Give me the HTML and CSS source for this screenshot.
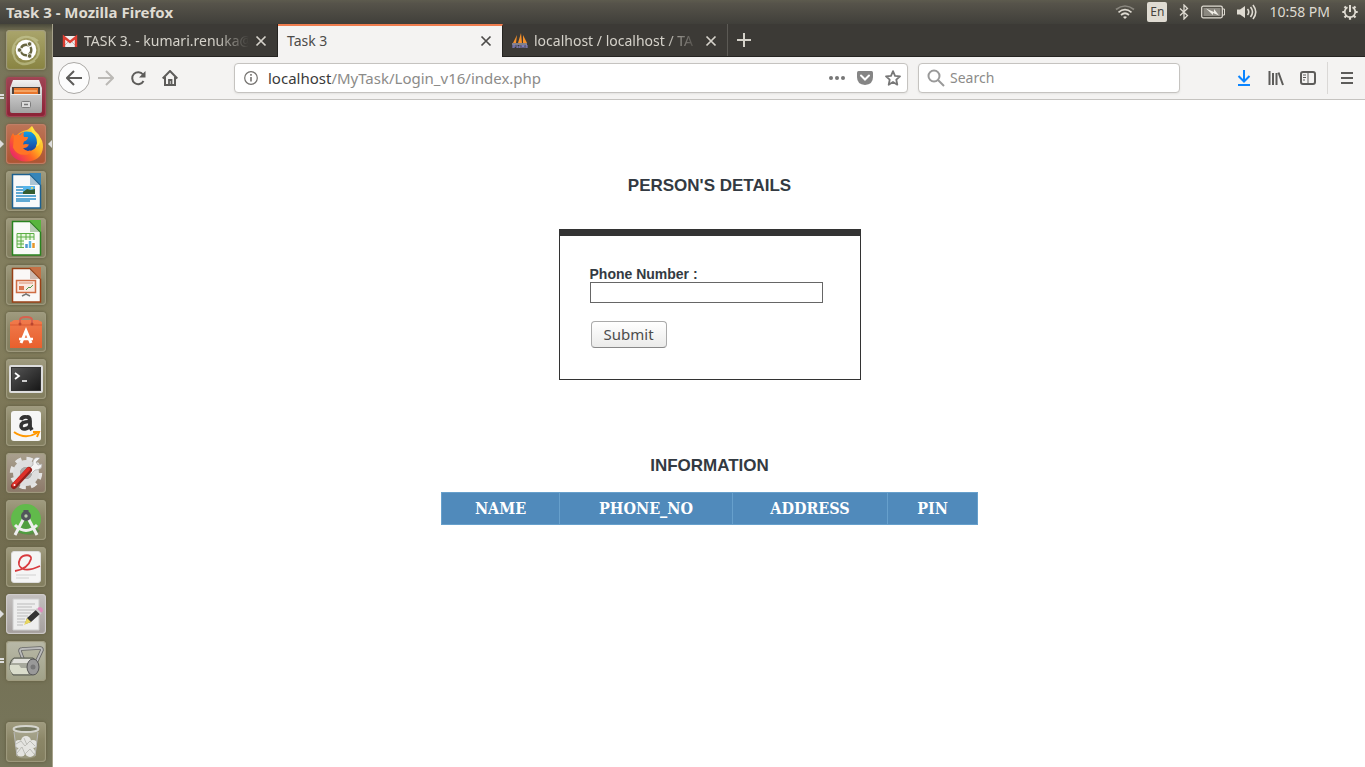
FILE: index.html
```html
<!DOCTYPE html>
<html lang="en">
<head>
<meta charset="utf-8">
<title>Task 3</title>
<link rel="stylesheet" href="styles.css">
</head>
<body>
<header class="panel">
  <span class="panel-title">Task 3 - Mozilla Firefox</span>
  <div class="indicators">
    <svg width="20" height="16" viewBox="0 0 20 16" fill="none" stroke="#dfdbd2" stroke-width="1.7"><path d="M1 5.5Q10-1.500 19 5.500" stroke="#8a877f"/><path d="M3.500 8.300Q10 3 16.500 8.300M6 11Q10 7.500 14 11"/><path d="M8 13Q10 11.300 12 13L10 15z" fill="#dfdbd2" stroke="none"/></svg>
    <span class="lang">En</span>
    <svg width="10" height="16" viewBox="0 0 10 16" fill="none" stroke="#dfdbd2" stroke-width="1.300"><path d="M1 4.500l7.500 7L5 15V1l3.500 3.500L1 11.500"/></svg>
    <svg width="24" height="14" viewBox="0 0 24 14"><rect x=".7" y="1.200" width="20.600" height="11.600" rx="1.500" fill="none" stroke="#dfdbd2" stroke-width="1.300"/><rect x="2.500" y="3" width="17" height="8" fill="#8b8880"/><path d="M22 4h1.500v6H22" fill="none" stroke="#dfdbd2"/><path d="M5 3.500l8 3.500V4l5 6.500-6-2.500v2z" fill="#f0ede6"/></svg>
    <svg width="20" height="16" viewBox="0 0 20 16" fill="none" stroke="#dfdbd2" stroke-width="1.600"><path d="M0 5.500h3L8 2v12L3 10.500H0z" fill="#dfdbd2" stroke="none"/><path d="M10.500 5q2.500 3 0 6M13.500 3q4 5 0 10M16 1q5.500 7 0 14"/></svg>
    <time class="clock">10:58 PM</time>
    <svg width="16" height="16" viewBox="0 0 16 16" fill="none" stroke="#dfdbd2"><path d="M5.500 3.200a5.300 5.300 0 1 0 5 0" stroke-width="1.800"/><path d="M8 1v7" stroke-width="2"/><path d="M.3 8H3m10 0h2.700M8 13v2.800M2.500 13.500l2-2m9 2l-2-2M2.500 2.500l2 2m9-2l-2 2" stroke-width="2.200"/></svg>
  </div>
</header>
<div class="desktop">
  <nav class="launcher" aria-label="Launcher">
    <button class="app olive" aria-label="Search"><svg viewBox="0 0 40 40"><path d="M7 24C4 9 22 2 32 11M11 10C24 0 38 15 31 27M32 14c5 15-10 24-22 17M29 31C14 40 3 28 9 15" fill="none" stroke="#ced0a0" stroke-opacity=".55" stroke-width="2"/><circle cx="20" cy="20" r="10.300" fill="#fff"/><circle cx="20" cy="20" r="5.300" fill="none" stroke="#686642" stroke-width="2.400" stroke-dasharray="9.700 1.400" stroke-dashoffset="4"/><g fill="#686642" stroke="#fff" stroke-width=".8"><circle cx="13.500" cy="20" r="2.300"/><circle cx="23.600" cy="14" r="2.300"/><circle cx="23.600" cy="26" r="2.300"/></g></svg></button>
    <button class="app crimson" aria-label="Files"><svg viewBox="0 0 40 40"><defs><linearGradient id="g1" x2="0" y2="1"><stop stop-color="#f2f2f2"/><stop offset="1" stop-color="#999"/></linearGradient><linearGradient id="g5" x2="0" y2="1"><stop stop-color="#c9c9c9"/><stop offset="1" stop-color="#a2a2a2"/></linearGradient></defs><path d="M7 3h26l3 8v23q0 2-2 2H6q-2 0-2-2V11z" fill="url(#g1)"/><path d="M6 10h28v7H6z" fill="#514239"/><path d="M8 11h24v6H8z" fill="#e8772e"/><path d="M8 14h23" stroke="#ffd097"/><path d="M5 17h30v17q0 2-2 2H7q-2 0-2-2z" fill="url(#g5)"/><path d="M5 17.500h30" stroke="#eee"/><rect x="15.500" y="24.500" width="9" height="6" rx="1" fill="#ddd" stroke="#7c7c7c"/><path d="M18 27.500h4" stroke="#777" stroke-width="1.500"/></svg><i class="pips two"></i></button>
    <button class="app rust" aria-label="Firefox"><svg viewBox="0 0 40 40"><defs><linearGradient id="g2" x1=".95" y1=".1" x2=".1" y2=".9"><stop stop-color="#fff04e"/><stop offset=".4" stop-color="#ffb020"/><stop offset=".65" stop-color="#ff6424"/><stop offset="1" stop-color="#e8226c"/></linearGradient><linearGradient id="g6" x2="0" y2="1"><stop stop-color="#10a0e8"/><stop offset="1" stop-color="#1c3f9c"/></linearGradient></defs><path d="M7 9q1 3 3 3 4-5 11-6 2-1 5-4 0 5 4 7 2 1 3 3 4 4 4 11-1 14-17 14.500Q4 37 3.500 22 3.500 14 7 9z" fill="url(#g2)"/><path d="M13 11q4-5 12-3 6 3 6 11-1 8-9 8-8 0-9-7z" fill="url(#g6)"/><path d="M8 12q3-2 6-1 1-2 4-3-1 3 0 5h4q0 3-4 4.500l-1 3q3-1 6 0-2 4-6 3.500 3 4 7 2.500 2 2-2 4-11 2-15-7z" fill="#ff7426"/><path d="M26 2q-2 6 3 9 4 5 1 12 7-4 3-12-4-3-7-9z" fill="#ffe540"/></svg><i class="pips"></i><i class="focus"></i></button>
    <button class="app" aria-label="Writer"><svg viewBox="0 0 40 40"><path d="M6.500 3.500H24L34.500 14v23h-28z" fill="#f8f9fa" stroke="#1c6090" stroke-width="1.500"/><path d="M23 2h12v12z" fill="#3585b9"/><path d="M24 3v11h10z" fill="#1f648f" opacity=".35"/><path d="M10 16h9m-9 3h9m-9 3h9m-9 3h20M10 28h20m-20 2h14" stroke="#60a9d3" stroke-width="1.800"/><path d="M17 15h12v8H17z" fill="#54b5ec"/><path d="M17 21l4-3 4 1 4-1v5H17z" fill="#355c30"/><circle cx="26" cy="17" r="1" fill="#ffe15a"/></svg></button>
    <button class="app" aria-label="Calc"><svg viewBox="0 0 40 40"><path d="M6.500 3.500H24L34.500 14v23h-28z" fill="#f8faf7" stroke="#28821e" stroke-width="1.500"/><path d="M23 2h12v12z" fill="#58b53d"/><path d="M24 3v11h10z" fill="#39762e" opacity=".35"/><path d="M11 15.500h17v14H11z" fill="#e8f7df" stroke="#5bae44"/><path d="M11 19h17m-17 4h17m-17 3h17M15 15v14m5-14v14m4-14v14" stroke="#5bae44"/><path d="M18 22h12v9H18z" fill="#fff"/><path d="M20.500 30v-4" stroke="#5194cc" stroke-width="2.500"/><path d="M24 30v-7" stroke="#5bb4df" stroke-width="2.500"/><path d="M27.500 30v-5" stroke="#e8972b" stroke-width="2.500"/></svg></button>
    <button class="app" aria-label="Impress"><svg viewBox="0 0 40 40"><path d="M6.500 3.500H24L34.500 14v23h-28z" fill="#faf8f7" stroke="#994016" stroke-width="1.500"/><path d="M23 2h12v12z" fill="#c57044"/><path d="M24 3v11h10z" fill="#75452b" opacity=".35"/><path d="M10.500 15.500h19v12h-19z" fill="#fae9e1" stroke="#cf6c43" stroke-width="1.500"/><path d="M13 18h14" stroke="#d98e6d"/><path d="M13 21h5v4h-5z" fill="#d97751"/><path d="M20 25l3-3 1 1 3-3" fill="none" stroke="#4e9b4a"/><path d="M20 28v2m-4 1l4-2 4 2" fill="none" stroke="#777" stroke-width="1.500"/></svg></button>
    <button class="app" aria-label="Software"><svg viewBox="0 0 40 40"><defs><linearGradient id="g3" x2="0" y2="1"><stop stop-color="#f07a4c"/><stop offset="1" stop-color="#e8602d"/></linearGradient></defs><path d="M5 10l3-2h24l4 2v26H4V10z" fill="url(#g3)"/><path d="M4 13h32" stroke="#d95b33"/><path d="M14 12V8q0-3 6-3t6 3v4" fill="none" stroke="#d9604d" stroke-width="2"/><circle cx="14" cy="12" r="1.500" fill="#b9452e"/><circle cx="26" cy="12" r="1.500" fill="#b9452e"/><path d="M15 31l5-12 5 12" fill="none" stroke="#fff" stroke-width="3"/><path d="M13 27h14" stroke="#fff" stroke-width="2.500"/></svg></button>
    <button class="app" aria-label="Terminal"><svg viewBox="0 0 40 40"><defs><linearGradient id="g4" x2="1" y2="1"><stop stop-color="#555"/><stop offset="1" stop-color="#171717"/></linearGradient></defs><rect x="3" y="6" width="34" height="28" rx="2" fill="#ddd"/><rect x="5.500" y="8.500" width="29" height="23" fill="url(#g4)" stroke="#333"/><path d="M9 14l4 3-4 3m7 2h5" fill="none" stroke="#fff" stroke-width="1.700"/></svg></button>
    <button class="app" aria-label="Amazon"><svg viewBox="0 0 40 40"><rect x="5" y="5" width="30" height="30" rx="3" fill="#f6f6f6"/><path d="M15 14q1-4 6-3 3 0 3 4v6l2 3" fill="none" stroke="#333" stroke-width="3.800"/><path d="M24 15.500c-6 0-9 1-9 4.500 0 5 8 3 9-1" fill="none" stroke="#333" stroke-width="3.600"/><path d="M8 26q11 8 23 1" fill="none" stroke="#ff9800" stroke-width="2"/><path d="M27 26h6l-2 5" fill="none" stroke="#ff9800" stroke-width="2"/></svg></button>
    <button class="app grey" aria-label="System settings"><svg viewBox="0 0 40 40"><circle cx="20" cy="20" r="14" fill="none" stroke="#e4e4e4" stroke-width="4.500" stroke-dasharray="6 5"/><circle cx="20" cy="20" r="9.500" fill="none" stroke="#dedede" stroke-width="7"/><circle cx="20" cy="20" r="6" fill="#aaa"/><path d="M22 16l5-4V8q2-5 7-3l-4 4 2 3 4-1q0 6-7 6l-4 4z" fill="#f5f5f5" stroke="#aaa" stroke-width=".7"/><path d="M8 33l15-16" stroke="#94201b" stroke-width="6" stroke-linecap="round"/><path d="M7.500 32l15-16" stroke="#de3029" stroke-width="3.500" stroke-linecap="round"/><circle cx="8.500" cy="32" r="1" fill="#fff"/></svg></button>
    <button class="app" aria-label="Android Studio"><svg viewBox="0 0 40 40"><circle cx="20" cy="19" r="15" fill="#61ba4b"/><path d="M10 32l9-14 15 13Q26 38 10 32z" fill="#448c38" opacity=".6"/><path d="M18 18L9 35m13-17l9 17M9 25q11 11 22 0" fill="none" stroke="#eee" stroke-width="3"/><path d="M20 10v4" stroke="#52555b" stroke-width="5"/><circle cx="20" cy="16" r="5" fill="#52555b"/><circle cx="20" cy="16" r="1.700" fill="#b9cfab"/></svg></button>
    <button class="app" aria-label="Document viewer"><svg viewBox="0 0 40 40"><rect x="5.500" y="4.500" width="29" height="31" rx="2.500" fill="#f5f5f5" stroke="#ddd"/><path d="M9 24Q22 22 25 12c1-5-8-5-11 0-4 8 3 15 20 7" fill="none" stroke="#d83b3f" stroke-width="1.800"/><path d="M10 28h20m-20 3h13" stroke="#ddd" stroke-width="1.500"/></svg></button>
    <button class="app light" aria-label="Text editor"><svg viewBox="0 0 40 40"><path d="M7 5h26v31H7z" fill="#eee" stroke="#ccc"/><path d="M11 10h18M11 13h15M11 16h18M11 19h14M11 22h11M11 25h8M11 28h9M11 31h6" stroke="#bbb"/><path d="M19 30l2-6 10-9 4 4-10 9z" fill="#333"/><path d="M18 31l3-7 4 4z" fill="#e8d65f"/><path d="M31 15l2-2q4 0 4 4l-2 2z" fill="#df8bbb"/><path d="M30 15l5 5" stroke="#ccc" stroke-width="2"/></svg><i class="pips"></i></button>
    <button class="app pale" aria-label="Disk tools"><svg viewBox="0 0 40 40"><path d="M17 18L14 10q0-2 2-2l18-1q2 0 2 2l-7 15" fill="none" stroke="#666" stroke-width="3.500"/><path d="M17 18L14 10q0-2 2-2l18-1q2 0 2 2l-7 15" fill="none" stroke="#bbb" stroke-width="1.800"/><path d="M8 17h19q7 4 4 12-2 5-7 5H7q-4-5-3-11 1-5 4-6z" fill="#a7a99d" stroke="#55584f"/><path d="M4 24h9l2 3h7v6H7q-4-3-3-9z" fill="#d9dccb"/><path d="M8 18h16v4H6z" fill="#e2e2dd"/><ellipse cx="27" cy="26" rx="6" ry="8" fill="#999" stroke="#555"/><circle cx="27" cy="26" r="2.500" fill="#777"/></svg><i class="pips two"></i></button>
    <button class="app bin" aria-label="Trash"><svg viewBox="0 0 40 40"><path d="M8 8h24l-3 27q-9 3-18 0z" fill="#ccd0c5" fill-opacity=".3"/><g fill="#e4e4e0"><circle cx="13" cy="22" r="4"/><circle cx="20" cy="19" r="5"/><circle cx="27" cy="22" r="4"/><circle cx="15" cy="30" r="4.500"/><circle cx="24" cy="30" r="5"/><circle cx="20" cy="26" r="5"/></g><path d="M10 22l5-3 4 5 5-5 5 5M11 31l5-6 3 7 5-5 4 5M18 16l3 7" fill="none" stroke="#bcbcb6"/><ellipse cx="20" cy="7" rx="12.500" ry="3" fill="#777960" stroke="#d5d5ce" stroke-width="2"/><path d="M8 10l3 24m21-24l-3 24" stroke="#bbb"/></svg></button>
  </nav>
  <div class="browser">
    <div class="tabs">
      <div class="tab">
        <svg width="16" height="16" viewBox="0 0 16 16"><path d="M1 3h14v11H1z" fill="#eee"/><path d="M1 14l5-5m9 5l-5-5" stroke="#bbb"/><path d="M2 14V4l6 5 6-5v10" fill="none" stroke="#dc3e32" stroke-width="2.400"/></svg>
        <span class="tab-name faded">TASK 3. - kumari.renuka@</span>
        <button class="close" aria-label="Close tab"><svg viewBox="0 0 12 12"><path d="M1.500 1.500l9 9m0-9l-9 9"/></svg></button>
      </div>
      <div class="tab active">
        <span class="tab-name">Task 3</span>
        <button class="close" aria-label="Close tab"><svg viewBox="0 0 12 12"><path d="M1.500 1.500l9 9m0-9l-9 9"/></svg></button>
      </div>
      <div class="tab">
        <svg width="16" height="16" viewBox="0 0 16 16"><path d="M1 10L5 2l-1 8zM6 10l3-10 1 10zM11 10V2l4 8z" fill="#f6912a"/><path d="M0 11h15" stroke="#cbc7dd"/><path d="M1 15v-3h2v2H1m4 1v-3m0 2h3m0 1v-3m2 3v-3l1 2 1-2v3m2 0v-3h1v3" fill="none" stroke="#8685c8"/></svg>
        <span class="tab-name faded">localhost / localhost / TA</span>
        <button class="close" aria-label="Close tab"><svg viewBox="0 0 12 12"><path d="M1.500 1.500l9 9m0-9l-9 9"/></svg></button>
      </div>
      <button class="new-tab" aria-label="New tab"><svg width="14" height="14" viewBox="0 0 14 14"><path d="M7 0v14M0 7h14" stroke="#d5d2ca" stroke-width="2"/></svg></button>
    </div>
    <div class="toolbar">
      <button class="tool back" aria-label="Back"><svg viewBox="0 0 16 16"><path d="M16 8H1.500m6.500-7L1 8l7 7"/></svg></button>
      <button class="tool forward" aria-label="Forward"><svg viewBox="0 0 16 16"><path d="M0 8h14.500M8 1l7 7-7 7"/></svg></button>
      <button class="tool" aria-label="Reload"><svg viewBox="0 0 16 16"><path d="M13.500 11A6 6 0 1 1 13 4.500"/><path d="M15.500 1v6.500H9z" fill="#5d5c5a" stroke="none"/></svg></button>
      <button class="tool" aria-label="Home"><svg viewBox="0 0 16 16"><path d="M.7 8.500L8 1l7.300 7.500M3 7v8h10V7"/><path d="M7 15v-5h2.500v5" stroke-width="1.800"/></svg></button>
      <div class="field address">
        <svg width="14" height="14" viewBox="0 0 14 14" fill="none" stroke="#73716e"><circle cx="7" cy="7" r="6.300" stroke-width="1.200"/><path d="M7 6v4.500M7 3v1.700" stroke-width="1.600"/></svg>
        <span class="url"><b>localhost</b>/MyTask/Login_v16/index.php</span>
        <button class="mini" aria-label="Page actions"><svg width="16" height="16" viewBox="0 0 16 16" fill="#777"><circle cx="2" cy="8" r="2"/><circle cx="8" cy="8" r="2"/><circle cx="14" cy="8" r="2"/></svg></button>
        <button class="mini" aria-label="Save to Pocket"><svg width="16" height="16" viewBox="0 0 16 16"><path d="M1.500 1h13Q16 1 16 2.500V7q0 7.500-8 8Q0 14.500 0 7V2.500Q0 1 1.500 1z" fill="#858585"/><path d="M4 5.500l4 4 4-4" fill="none" stroke="#fff" stroke-width="2" stroke-linecap="round"/></svg></button>
        <button class="mini" aria-label="Bookmark"><svg width="16" height="16" viewBox="0 0 16 16"><path d="M8 1.200l2 4.600 5 .5-3.700 3.400 1 5L8 12l-4.300 2.700 1-5L1 6.300l5-.5z" fill="none" stroke="#777" stroke-width="1.800" stroke-linejoin="round"/></svg></button>
      </div>
      <label class="field search">
        <svg width="18" height="18" viewBox="0 0 18 18" fill="none" stroke="#999" stroke-width="2"><circle cx="7" cy="7" r="5.500"/><path d="M11 11l6 6"/></svg>
        <input type="text" placeholder="Search" aria-label="Search">
      </label>
      <div class="actions">
        <button class="tool blue" aria-label="Downloads"><svg viewBox="0 0 16 16"><path d="M8 0v11M2.500 6L8 11.500 13.500 6M2 15h12"/></svg></button>
        <button class="tool" aria-label="Library"><svg viewBox="0 0 16 16"><path d="M1.500 1v14M5 3v12M8.500 3v12M10.500 2.500L15 15"/></svg></button>
        <button class="tool" aria-label="Sidebar"><svg viewBox="0 0 16 16"><rect x="1" y="2" width="14" height="12" rx="2"/><path d="M8 2v12M3 5h3M3 7.500h3M3 10h2" stroke-width="1"/></svg></button>
      </div>
      <button class="tool menu" aria-label="Menu"><svg viewBox="0 0 16 16"><path d="M2 3h12M2 8h12M2 13h12"/></svg></button>
    </div>
    <main class="page">
      <h2>PERSON'S DETAILS</h2>
      <form class="details">
        <label for="phone">Phone Number :</label>
        <input id="phone" type="text">
        <button type="button">Submit</button>
      </form>
      <h2>INFORMATION</h2>
      <table class="info">
        <colgroup><col class="c-name"><col class="c-phone"><col class="c-address"><col class="c-pin"></colgroup>
        <thead><tr><th>NAME</th><th>PHONE_NO</th><th>ADDRESS</th><th>PIN</th></tr></thead>
      </table>
    </main>
  </div>
</div>
</body>
</html>
```
FILE: styles.css
```css
* { box-sizing: border-box; }
body {
  margin: 0;
  min-height: 100vh;
  display: flex;
  flex-direction: column;
  font: 14px/20px "Noto Sans", sans-serif;
  background: #fff;
}
button { border: 0; padding: 0; background: none; font: inherit; color: inherit; }
svg { display: block; flex: none; }

.panel {
  height: 24px;
  padding: 0 7px 0 6px;
  display: flex;
  align-items: center;
  justify-content: space-between;
  background: linear-gradient(#5d5b4e, #56534a 15%, #403f3a);
  color: #dfdbd2;
}
.panel-title { font-size: 15px; font-weight: bold; }
.indicators { display: flex; align-items: center; gap: 12px; }
.lang {
  width: 20px;
  height: 20px;
  border-radius: 2px;
  background: #dfdbd2;
  color: #45433e;
  font-size: 12px;
  text-align: center;
}

.desktop { flex: 1; display: flex; }
.launcher {
  width: 53px;
  flex: none;
  padding: 6px 6px 5px;
  display: flex;
  flex-direction: column;
  gap: 7px;
  border-right: 1px solid #a7a38c;
  background: linear-gradient(#4a493a, #77745a 8px, #85805f 40%, #716b4e 65%, #77765b);
}
.app {
  position: relative;
  width: 40px;
  height: 40px;
  border-radius: 4px;
  background: linear-gradient(#a09c80, #8b8667 45%, #827e5f);
  box-shadow: 0 0 3px 1px #686448, inset 0 0 1px 1px #a09c80;
}
.app svg { width: 40px; height: 40px; }
.olive { background: linear-gradient(#aaa56c, #888341); }
.crimson { background: linear-gradient(#9e4554, #8b2135); box-shadow: 0 0 3px 1px #74584a, inset 0 0 1px 1px #a34857; }
.rust { background: linear-gradient(#bd7558, #ad5432); box-shadow: 0 0 3px 1px #7c6248, inset 0 0 1px 1px #c18069; }
.grey { background: linear-gradient(#aaa18f, #8b7868); }
.light { background: linear-gradient(#c3c0bf, #a49e9c); box-shadow: 0 0 3px 1px #686448, inset 0 0 1px 1px #d0cccb; }
.pale { background: linear-gradient(#b9b9a8, #a0a188); }
.bin { margin-top: auto; }
.pips, .focus { position: absolute; top: 16px; border: 4px solid transparent; }
.pips { left: -6px; border-width: 4px 0 4px 4px; border-left-color: #ddd; }
.pips.two { top: 17px; width: 4px; height: 5px; border: solid #ddd; border-width: 2px 0; }
.focus { right: -6px; border-width: 4px 4px 4px 0; border-right-color: #ddd; }

.browser { flex: 1; min-width: 0; display: flex; flex-direction: column; }
.tabs { height: 33px; display: flex; background: #3c3a36; border-bottom: 1px solid #252421; color: #d5d2ca; }
.tab {
  flex: 0 1 225px;
  min-width: 0;
  display: flex;
  align-items: center;
  gap: 6px;
  padding: 2px 10px 0 9px;
  border-right: 1px solid #252421;
}
.tab:nth-child(3) { border-right-color: #5c5a55; }
.tab.active {
  height: 33px;
  padding: 0 10px 1px 9px;
  background: #f4f3f2;
  border-top: 2px solid #ef7d4f;
  color: #4c4b49;
}
.tab-name { flex: 1; white-space: nowrap; }
.faded { min-width: 0; mask-image: linear-gradient(to left, transparent, #000 34px); }
.close svg { width: 12px; height: 12px; fill: none; stroke: currentColor; stroke-width: 1.7; }
.new-tab { padding: 0 9px; }

.toolbar {
  height: 43px;
  padding: 0 6px 0 5px;
  display: flex;
  align-items: center;
  background: #f4f3f2;
  border-bottom: 1px solid #c5c3c0;
}
.tool { flex: none; width: 32px; height: 32px; display: grid; place-items: center; color: #5d5c5a; }
.tool svg { width: 16px; height: 16px; fill: none; stroke: currentColor; stroke-width: 2; }
.tool.back { border: 1px solid #aaa8a5; border-radius: 50%; background: #fcfcfc; }
.tool.forward { color: #bbb9b6; }
.tool.blue { color: #0a84ff; }
.field {
  height: 30px;
  display: flex;
  align-items: center;
  padding: 0 6px 0 9px;
  background: #fff;
  border: 1px solid #c5c3c0;
  border-radius: 4px;
  box-shadow: 0 1px 2px #e3e2e0;
  font-size: 15px;
}
.address { flex: 1 1 0; min-width: 0; margin: 0 10px 0 48px; gap: 10px; }
.url { flex: 1; overflow: hidden; white-space: nowrap; color: #8c8b89; }
.url b { font-weight: 400; color: #3a3a3a; }
.mini { margin-left: 2px; }
.search { flex: 0 1 262px; min-width: 0; gap: 5px; padding-left: 8px; }
.search input { width: 100%; border: 0; padding: 0; outline: 0; background: none; font: 14px/20px "Noto Sans", sans-serif; }
.search input::placeholder { color: #8c8b89; opacity: 1; }
.actions { margin-left: 48px; display: flex; }
.menu { margin-left: 3px; border-left: 1px solid #dad8d6; padding-left: 6px; }

.page { flex: 1; display: flex; flex-direction: column; align-items: center; padding: 76px 0 0 1px; }
.page h2 { margin: 0; font: bold 17px/20px "Liberation Sans", sans-serif; color: #333a42; }
.details {
  width: 302px;
  margin: 33px 0 76px;
  padding: 30px;
  display: flex;
  flex-direction: column;
  align-items: flex-start;
  border: 1px solid #333;
  border-top-width: 7px;
}
.details label { font: bold 14px/16px "Liberation Sans", sans-serif; color: #333a42; }
.details input { width: 233px; height: 21px; padding: 1px 4px; border: 1px solid #666; }
.details button {
  margin: 18px 0 1px 1px;
  padding: 3px 12px 4px;
  border: 1px solid #aaa;
  border-bottom-color: #888;
  border-radius: 4px;
  background: linear-gradient(#fff, #ebebea);
  color: #4c4c4c;
  font-size: 15px;
  line-height: 18px;
}
.info { width: 537px; margin-top: 16px; table-layout: fixed; border-collapse: collapse; }
.info th {
  height: 32px;
  padding: 0;
  border: 1px solid #67a0cc;
  background: #508abb;
  color: #fff;
  font: bold 16px/20px "DejaVu Serif Condensed", "DejaVu Serif", serif;
}
.c-name { width: 118px; }
.c-phone { width: 173px; }
.c-address { width: 155px; }
.c-pin { width: 90px; }
```
